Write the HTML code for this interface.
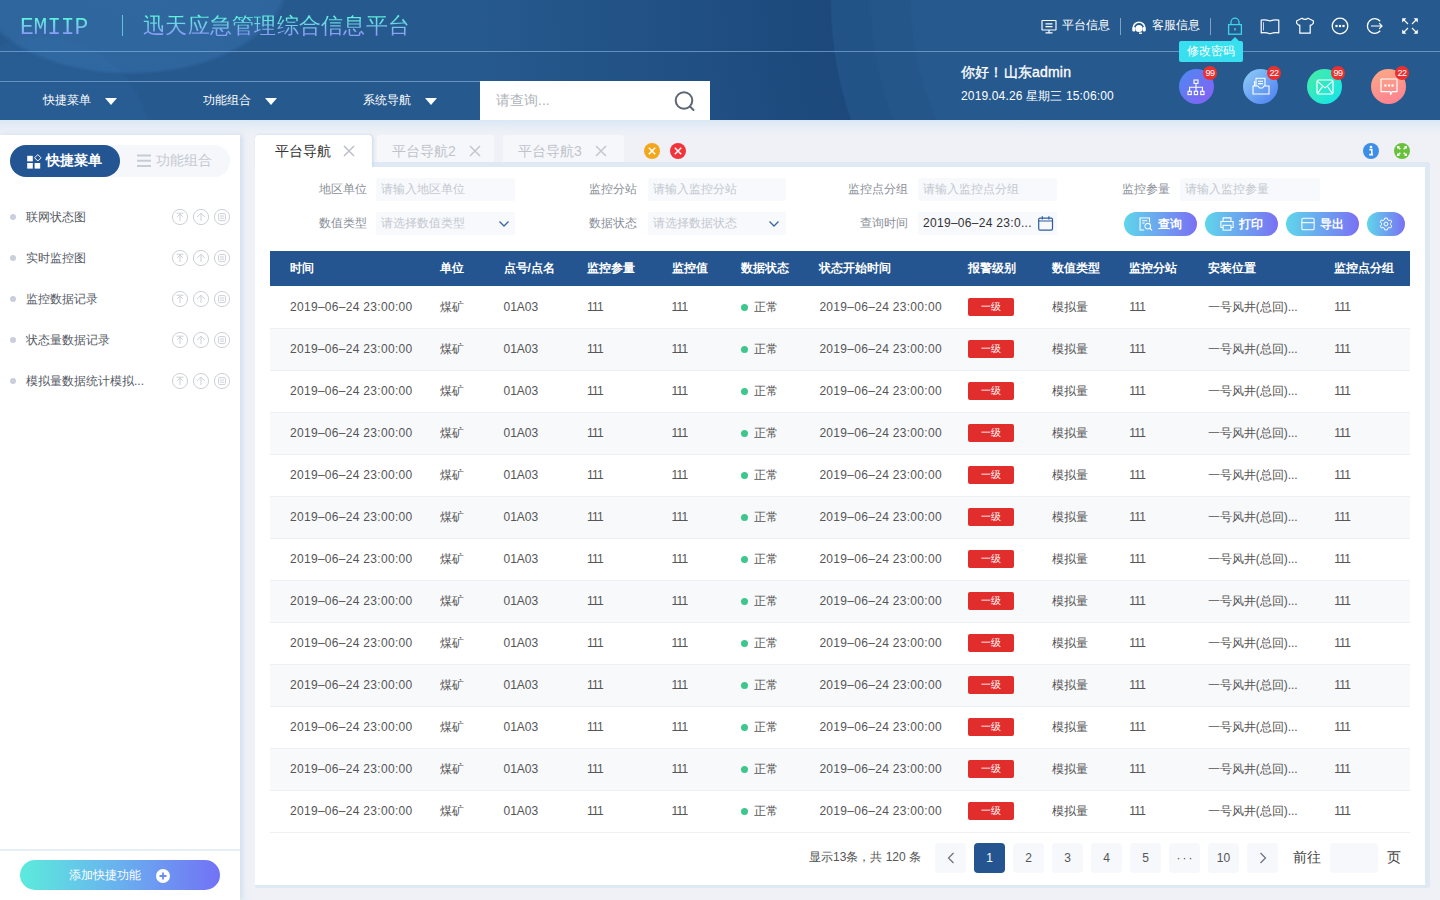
<!DOCTYPE html>
<html><head><meta charset="utf-8">
<style>
*{margin:0;padding:0;box-sizing:border-box}
html,body{width:1440px;height:900px;overflow:hidden}
body{font-family:"Liberation Sans",sans-serif;background:#eff1f7;position:relative;color:#333}
.a{position:absolute}
svg{position:absolute;overflow:visible}
#hdr{position:absolute;left:0;top:0;width:1440px;height:120px;overflow:hidden;
 background:
  radial-gradient(circle at 1200px 0px, rgba(8,38,85,0) 288px, rgba(8,38,85,.06) 290px, rgba(8,38,85,.06) 328px, rgba(8,38,85,.12) 330px, rgba(8,38,85,.12) 368px, rgba(8,38,85,.32) 370px, rgba(8,38,85,0) 720px),
  radial-gradient(ellipse 160px 95px at 130px -20px, rgba(75,145,210,.26) 0, rgba(75,145,210,.22) 96%, rgba(75,145,210,0) 100%),
  radial-gradient(circle at 40px 150px, rgba(60,130,200,.10) 0, rgba(60,130,200,.08) 110px, rgba(60,130,200,0) 114px),
  #26598e}
#hdr .l1{position:absolute;left:0;top:51px;width:1440px;height:1px;background:rgba(140,185,230,.6)}
#hdr .l2{position:absolute;left:0;top:81px;width:480px;height:1px;background:rgba(140,185,230,.6)}
.logo{position:absolute;left:20px;top:14px;font-family:"Liberation Mono",monospace;font-size:23px;line-height:28px;letter-spacing:-0.2px;
 background:linear-gradient(#5ff2dc 18%,#8d9af8 72%);-webkit-background-clip:text;background-clip:text;color:transparent}
.vsep{position:absolute;left:122px;top:15px;width:1px;height:21px;background:rgba(110,220,235,.8)}
.title{position:absolute;left:143px;top:12px;font-size:22px;line-height:28px;white-space:nowrap;letter-spacing:.25px;
 background:linear-gradient(#5ff2dc 18%,#8a9ef6 78%);-webkit-background-clip:text;background-clip:text;color:transparent}
.nav{position:absolute;top:81px;height:39px;width:160px;color:#fff;font-size:12px;line-height:39px}
.nav span{position:absolute;left:43px;top:0}
.nav i{position:absolute;left:105px;top:17px;width:0;height:0;border-left:6px solid transparent;border-right:6px solid transparent;border-top:7px solid #fff}
#search{position:absolute;left:480px;top:81px;width:230px;height:39px;background:#fff}
#search span{position:absolute;left:16px;top:0;line-height:39px;font-size:14px;color:#aeb2ba}
.tr{position:absolute;top:18px;font-size:12px;line-height:14px;color:#fff;white-space:nowrap}
.hsep{position:absolute;top:18px;width:1px;height:17px;background:rgba(200,220,240,.55)}
.tip{position:absolute;left:1179px;top:41px;width:64px;height:21px;background:#38dfee;border-radius:2px;color:#fff;font-size:12px;line-height:21px;text-align:center}
.tip:before{content:"";position:absolute;left:52px;top:-4px;border-left:4px solid transparent;border-right:4px solid transparent;border-bottom:4px solid #38dfee}
.hello{position:absolute;left:961px;top:63px;font-size:14px;line-height:18px;color:#fff;white-space:nowrap;-webkit-text-stroke:.35px #fff;letter-spacing:.2px}
.date{position:absolute;left:961px;top:89px;font-size:12px;line-height:15px;color:#fff;white-space:nowrap;letter-spacing:.15px}
.circ{position:absolute;top:68.5px;width:35px;height:35px;border-radius:50%}
.badge{position:absolute;top:66px;width:14px;height:14px;border-radius:50%;background:#e9302f;color:#fff;font-size:9px;line-height:14px;text-align:center;letter-spacing:-.5px}
/*MAINCSS*/.tabt{font-size:14px;line-height:18px;white-space:nowrap}
.lab{font-size:12px;line-height:15px;color:#8a8f99;text-align:right;white-space:nowrap}
.inp{height:23px;background:#f7f9fc;border-radius:2px}
.inp span{position:absolute;left:5px;top:4px;font-size:12px;line-height:15px;white-space:nowrap}
.inp .ph{color:#c4c8d0}
.inp .val{color:#333;letter-spacing:.3px}
.btn{height:24px;border-radius:12px;background:linear-gradient(90deg,#5fd6ea,#7a70f4)}
.btnt{font-size:12px;line-height:24px;color:#fff;font-weight:bold}
.th{font-size:12px;line-height:15px;color:#fff;font-weight:bold;white-space:nowrap}
.td{font-size:12px;line-height:15px;color:#555;white-space:nowrap}
.td.num{letter-spacing:.3px}
.lvl{width:46px;height:18px;background:#e22d2d;border-radius:2px;color:#fff;font-size:10px;line-height:17px;text-align:center}
.pgt{font-size:12px;line-height:16px;color:#555;white-space:nowrap}
.pg{width:31px;height:30px;background:#f6f8fb;border-radius:4px;font-size:12px;line-height:30px;text-align:center;color:#555}
.pg.on{background:#245590;color:#fff}
.td.one{letter-spacing:-0.8px}
/*ENDMAINCSS*/</style></head><body>
<div id="hdr">
  <div class="l1"></div><div class="l2"></div>
  <div class="logo">EMIIP</div>
  <div class="vsep"></div>
  <div class="title">迅天应急管理综合信息平台</div>
  <div class="nav" style="left:0"><span>快捷菜单</span><i></i></div>
  <div class="nav" style="left:160px"><span>功能组合</span><i></i></div>
  <div class="nav" style="left:320px"><span>系统导航</span><i></i></div>
  <div id="search"><span>请查询...</span>
    <svg width="24" height="24" style="left:193px;top:8px" viewBox="0 0 24 24"><circle cx="11" cy="11.5" r="8.3" fill="none" stroke="#5c6675" stroke-width="2"/><path d="M17 17.5 L20.5 21" stroke="#5c6675" stroke-width="2" stroke-linecap="round"/></svg>
  </div>
  <!-- top right -->
  <svg width="16" height="16" style="left:1041px;top:19px" viewBox="0 0 16 16"><rect x="1" y="1.5" width="14" height="9.5" rx="0.5" fill="none" stroke="#fff" stroke-width="1.15"/><path d="M4.5 4.8h7M4.5 7.6h7M8 11v2.8M4.5 13.9h7" stroke="#fff" stroke-width="1.15" fill="none"/></svg>
  <div class="tr" style="left:1062px">平台信息</div>
  <div class="hsep" style="left:1120px"></div>
  <svg width="16" height="16" style="left:1131px;top:19px" viewBox="0 0 16 16"><path d="M2.2 9 A5.8 5.8 0 0 1 13.8 9" fill="none" stroke="#fff" stroke-width="1.6"/><rect x="1.3" y="8" width="3" height="4.5" rx="1.2" fill="#fff"/><rect x="11.7" y="8" width="3" height="4.5" rx="1.2" fill="#fff"/><circle cx="8" cy="9.5" r="3.6" fill="#fff"/><path d="M8 14.2 h3" stroke="#fff" stroke-width="1.4"/></svg>
  <div class="tr" style="left:1152px">客服信息</div>
  <div class="hsep" style="left:1210px"></div>
  <!-- lock -->
  <svg width="16" height="18" style="left:1227px;top:16.5px" viewBox="0 0 16 18"><path d="M4 7.5V5.2A4 4 0 0 1 12 5.2V7.5" fill="none" stroke="#3ed6e6" stroke-width="1.3"/><rect x="1.6" y="7.6" width="12.8" height="9.6" fill="none" stroke="#3ed6e6" stroke-width="1.3"/><path d="M8 11v2.6" stroke="#3ed6e6" stroke-width="1.4"/></svg>
  <!-- book -->
  <svg width="20" height="16" style="left:1260px;top:18.5px" viewBox="0 0 20 16"><path d="M1.2 1.2 Q5.5 0.3 10 2 Q14.5 0.3 18.8 1.2 V13.8 Q14.5 13 10 14.8 Q5.5 13 1.2 13.8 Z" fill="none" stroke="#fff" stroke-width="1.2" stroke-linejoin="round"/><path d="M3.5 3.2 V11.5" stroke="#fff" stroke-width="0.9" opacity=".8"/></svg>
  <!-- shirt -->
  <svg width="20" height="18" style="left:1295px;top:17px" viewBox="0 0 20 18"><path d="M7 1.2 Q10 3.5 13 1.2 L18.2 3.8 Q19.3 6.5 16.2 8.2 L15.2 8 V16.2 H4.8 V8 L3.8 8.2 Q0.7 6.5 1.8 3.8 Z" fill="none" stroke="#fff" stroke-width="1.2" stroke-linejoin="round"/></svg>
  <!-- dots -->
  <svg width="18" height="18" style="left:1331px;top:17px" viewBox="0 0 18 18"><circle cx="9" cy="9" r="7.8" fill="none" stroke="#fff" stroke-width="1.3"/><rect x="4.4" y="7.9" width="2.2" height="2.2" fill="#fff"/><rect x="7.9" y="7.9" width="2.2" height="2.2" fill="#fff"/><rect x="11.4" y="7.9" width="2.2" height="2.2" fill="#fff"/></svg>
  <!-- exit -->
  <svg width="18" height="18" style="left:1366px;top:17px" viewBox="0 0 18 18"><path d="M14.2 4.2 A7.3 7.3 0 1 0 14.2 13.8" fill="none" stroke="#fff" stroke-width="1.3"/><path d="M5 9 H16 M13.2 6.2 L16 9 L13.2 11.8" fill="none" stroke="#fff" stroke-width="1.2"/></svg>
  <!-- fullscreen -->
  <svg width="18" height="18" style="left:1401px;top:17px" viewBox="0 0 18 18"><g stroke="#fff" stroke-width="1.1" fill="none"><path d="M3 3L7 7M15 3L11 7M3 15L7 11M15 15L11 11"/></g><g fill="#fff"><path d="M1.2 1.2H5.4L1.2 5.4Z"/><path d="M16.8 1.2H12.6L16.8 5.4Z"/><path d="M1.2 16.8H5.4L1.2 12.6Z"/><path d="M16.8 16.8H12.6L16.8 12.6Z"/></g></svg>
  <div class="tip">修改密码</div>
  <div class="hello">你好！山东admin</div>
  <div class="date">2019.04.26 星期三 15:06:00</div>
  <div class="circ" style="left:1179px;background:linear-gradient(135deg,#4b8af2,#8a5ef4)"></div>
  <div class="circ" style="left:1243px;background:linear-gradient(135deg,#8fd0f7,#4c7cf0)"></div>
  <div class="circ" style="left:1307px;background:linear-gradient(135deg,#48eda2,#12e4ee)"></div>
  <div class="circ" style="left:1371px;background:linear-gradient(160deg,#fcaa84,#fd7f92)"></div>
  <!-- circle icons -->
  <svg width="18" height="18" style="left:1187px;top:78.5px" viewBox="0 0 18 18"><rect x="7" y="1" width="4" height="3.4" fill="none" stroke="#fff" stroke-width="1.1"/><path d="M9 4.4 V8.2 M2.6 12.3 V8.2 H15.4 V12.3 M9 8.2 V12.3" fill="none" stroke="#fff" stroke-width="1.1"/><rect x="1" y="12.3" width="3.3" height="3.3" fill="none" stroke="#fff" stroke-width="1.1"/><rect x="7.3" y="12.3" width="3.3" height="3.3" fill="none" stroke="#fff" stroke-width="1.1"/><rect x="13.7" y="12.3" width="3.3" height="3.3" fill="none" stroke="#fff" stroke-width="1.1"/></svg>
  <svg width="18" height="18" style="left:1252px;top:77px" viewBox="0 0 18 18"><path d="M4 9 V1.2 H13 V9" fill="none" stroke="#fff" stroke-width="1.1"/><path d="M2.5 4 V9" stroke="#fff" stroke-width="1.1"/><path d="M6 4.2 H11 M6 6.6 H11" stroke="#fff" stroke-width="1.1"/><path d="M1 9 H6 L7.5 11 H10.5 L12 9 H17 V17 H1 Z" fill="none" stroke="#fff" stroke-width="1.1"/></svg>
  <svg width="18" height="16" style="left:1315.5px;top:79px" viewBox="0 0 18 16"><rect x="1" y="1" width="16" height="14" rx="1.5" fill="none" stroke="#fff" stroke-width="1.2"/><path d="M1.3 2.2 L9 8.8 L16.7 2.2 M1.6 14.4 L6.4 7.6 M16.4 14.4 L11.6 7.6" fill="none" stroke="#fff" stroke-width="1.1"/></svg>
  <svg width="18" height="18" style="left:1380px;top:78px" viewBox="0 0 18 18"><path d="M1 1 H17 V13.6 H12.2 L10.6 16.6 L10.2 13.6 H1 Z" fill="none" stroke="#fff" stroke-width="1.15" stroke-linejoin="round"/><rect x="4.3" y="6.4" width="2.2" height="2.2" fill="#fff"/><rect x="7.9" y="6.4" width="2.2" height="2.2" fill="#fff"/><rect x="11.5" y="6.4" width="2.2" height="2.2" fill="#fff"/></svg>
  <div class="badge" style="left:1203px">99</div>
  <div class="badge" style="left:1267px">22</div>
  <div class="badge" style="left:1331px">99</div>
  <div class="badge" style="left:1395px">22</div>
</div>
<div id="mainbg" class="a" style="left:0;top:120px;width:1440px;height:780px;background:linear-gradient(#dae8f5 0,#e8eef6 8px,#eff1f7 15px)"></div>
<div id="side" class="a" style="left:0;top:135px;width:240px;height:765px;background:#fff;box-shadow:2px 0 6px rgba(180,205,230,.6)">
  <div class="a" style="left:10px;top:10px;width:220px;height:32px;border-radius:16px;background:#f5f7fa"></div>
  <div class="a" style="left:10px;top:10px;width:110px;height:32px;border-radius:16px;background:#235592"></div>
  <svg width="15" height="15" style="left:26.5px;top:18.5px" viewBox="0 0 15 15"><rect x="0.2" y="1.8" width="5.6" height="5.6" fill="#fff"/><rect x="0.2" y="9" width="5.6" height="5.6" fill="#fff"/><rect x="7.6" y="9" width="5.6" height="5.6" fill="#fff"/><path d="M10.8 0.6 L14 3.8 L10.8 7 L7.6 3.8 Z" fill="none" stroke="#fff" stroke-width="1"/></svg>
  <div class="a" style="left:46px;top:16px;font-size:14px;line-height:18px;color:#fff;font-weight:bold">快捷菜单</div>
  <svg width="15" height="14" style="left:136.5px;top:19px" viewBox="0 0 15 14"><path d="M0 1.5H14M0 6.8H14M0 12.1H14" stroke="#c6cbd5" stroke-width="2"/></svg>
  <div class="a" style="left:156px;top:16px;font-size:14px;line-height:18px;color:#c5c9d3">功能组合</div>
  <div class="a" style="left:10px;top:78.7px;width:6px;height:6px;border-radius:50%;background:#c9cfdb"></div>
  <div class="a" style="left:26px;top:73.7px;font-size:12px;line-height:16px;color:#555a64;white-space:nowrap">联网状态图</div>
  <svg width="60" height="18" style="left:171px;top:72.7px" viewBox="0 0 60 18"><g fill="none" stroke="#cdd0d7" stroke-width="1"><circle cx="9" cy="9" r="7.6"/><circle cx="30" cy="9" r="7.6"/><circle cx="51" cy="9" r="7.6"/><path d="M5.5 5.2H12.5M6.2 8.8L9 6L11.8 8.8M9 6V13"/><path d="M26.2 9L30 5.2L33.8 9M30 5.2V13"/><rect x="47.6" y="5.6" width="6.8" height="7" rx="1"/><path d="M49 8H53M49 10.2H53"/></g></svg>
  <div class="a" style="left:10px;top:119.7px;width:6px;height:6px;border-radius:50%;background:#c9cfdb"></div>
  <div class="a" style="left:26px;top:114.7px;font-size:12px;line-height:16px;color:#555a64;white-space:nowrap">实时监控图</div>
  <svg width="60" height="18" style="left:171px;top:113.7px" viewBox="0 0 60 18"><g fill="none" stroke="#cdd0d7" stroke-width="1"><circle cx="9" cy="9" r="7.6"/><circle cx="30" cy="9" r="7.6"/><circle cx="51" cy="9" r="7.6"/><path d="M5.5 5.2H12.5M6.2 8.8L9 6L11.8 8.8M9 6V13"/><path d="M26.2 9L30 5.2L33.8 9M30 5.2V13"/><rect x="47.6" y="5.6" width="6.8" height="7" rx="1"/><path d="M49 8H53M49 10.2H53"/></g></svg>
  <div class="a" style="left:10px;top:160.7px;width:6px;height:6px;border-radius:50%;background:#c9cfdb"></div>
  <div class="a" style="left:26px;top:155.7px;font-size:12px;line-height:16px;color:#555a64;white-space:nowrap">监控数据记录</div>
  <svg width="60" height="18" style="left:171px;top:154.7px" viewBox="0 0 60 18"><g fill="none" stroke="#cdd0d7" stroke-width="1"><circle cx="9" cy="9" r="7.6"/><circle cx="30" cy="9" r="7.6"/><circle cx="51" cy="9" r="7.6"/><path d="M5.5 5.2H12.5M6.2 8.8L9 6L11.8 8.8M9 6V13"/><path d="M26.2 9L30 5.2L33.8 9M30 5.2V13"/><rect x="47.6" y="5.6" width="6.8" height="7" rx="1"/><path d="M49 8H53M49 10.2H53"/></g></svg>
  <div class="a" style="left:10px;top:201.7px;width:6px;height:6px;border-radius:50%;background:#c9cfdb"></div>
  <div class="a" style="left:26px;top:196.7px;font-size:12px;line-height:16px;color:#555a64;white-space:nowrap">状态量数据记录</div>
  <svg width="60" height="18" style="left:171px;top:195.7px" viewBox="0 0 60 18"><g fill="none" stroke="#cdd0d7" stroke-width="1"><circle cx="9" cy="9" r="7.6"/><circle cx="30" cy="9" r="7.6"/><circle cx="51" cy="9" r="7.6"/><path d="M5.5 5.2H12.5M6.2 8.8L9 6L11.8 8.8M9 6V13"/><path d="M26.2 9L30 5.2L33.8 9M30 5.2V13"/><rect x="47.6" y="5.6" width="6.8" height="7" rx="1"/><path d="M49 8H53M49 10.2H53"/></g></svg>
  <div class="a" style="left:10px;top:242.7px;width:6px;height:6px;border-radius:50%;background:#c9cfdb"></div>
  <div class="a" style="left:26px;top:237.7px;font-size:12px;line-height:16px;color:#555a64;white-space:nowrap">模拟量数据统计模拟...</div>
  <svg width="60" height="18" style="left:171px;top:236.7px" viewBox="0 0 60 18"><g fill="none" stroke="#cdd0d7" stroke-width="1"><circle cx="9" cy="9" r="7.6"/><circle cx="30" cy="9" r="7.6"/><circle cx="51" cy="9" r="7.6"/><path d="M5.5 5.2H12.5M6.2 8.8L9 6L11.8 8.8M9 6V13"/><path d="M26.2 9L30 5.2L33.8 9M30 5.2V13"/><rect x="47.6" y="5.6" width="6.8" height="7" rx="1"/><path d="M49 8H53M49 10.2H53"/></g></svg>
  
  <div class="a" style="left:0;top:714px;width:240px;height:2px;background:#e6eef7"></div>
  <div class="a" style="left:20px;top:725px;width:200px;height:30px;border-radius:15px;background:linear-gradient(90deg,#5cebdc,#68b6ee 45%,#7272f5)"></div>
  <div class="a" style="left:69px;top:732px;font-size:12px;line-height:16px;color:#fff">添加快捷功能</div>
  <div class="a" style="left:155.5px;top:733.5px;width:14px;height:14px;border-radius:50%;background:#fff"></div>
  <svg width="14" height="14" style="left:155.5px;top:733.5px" viewBox="0 0 14 14"><path d="M7 3.5V10.5M3.5 7H10.5" stroke="#6b8cf0" stroke-width="1.8"/></svg>
</div>
<!-- tabs -->
<div class="a" style="left:255px;top:162px;width:1175px;height:726px;background:#dfe9f4;border-radius:2px"></div>
<div class="a" style="left:255px;top:135px;width:117px;height:32px;background:#fff;border-radius:4px 4px 0 0;box-shadow:1px 0 3px rgba(170,200,230,.6)"></div>
<div class="a" style="left:377px;top:135px;width:117px;height:27px;background:#f6f7fa;border-radius:4px 4px 0 0"></div>
<div class="a" style="left:503px;top:135px;width:121px;height:27px;background:#f6f7fa;border-radius:4px 4px 0 0"></div>
<div class="a tabt" style="left:275px;top:142px;color:#333">平台导航</div>
<div class="a tabt" style="left:392px;top:142px;color:#bfc3cc">平台导航2</div>
<div class="a tabt" style="left:518px;top:142px;color:#bfc3cc">平台导航3</div>
<svg width="12" height="12" style="left:343px;top:145px" viewBox="0 0 12 12"><path d="M1 1L11 11M11 1L1 11" stroke="#bcc0c8" stroke-width="1.5"/></svg>
<svg width="12" height="12" style="left:469px;top:145px" viewBox="0 0 12 12"><path d="M1 1L11 11M11 1L1 11" stroke="#c3c7cf" stroke-width="1.5"/></svg>
<svg width="12" height="12" style="left:595px;top:145px" viewBox="0 0 12 12"><path d="M1 1L11 11M11 1L1 11" stroke="#c3c7cf" stroke-width="1.5"/></svg>
<svg width="18" height="18" style="left:643px;top:142px" viewBox="0 0 18 18"><circle cx="9" cy="9" r="8" fill="#f3a71c"/><path d="M5.8 5.8L12.2 12.2M12.2 5.8L5.8 12.2" stroke="#fff" stroke-width="1.5"/></svg>
<svg width="18" height="18" style="left:669px;top:142px" viewBox="0 0 18 18"><circle cx="9" cy="9" r="8" fill="#f2343a"/><path d="M5.8 5.8L12.2 12.2M12.2 5.8L5.8 12.2" stroke="#fff" stroke-width="1.5"/></svg>
<svg width="18" height="18" style="left:1362px;top:142px" viewBox="0 0 18 18"><circle cx="9" cy="9" r="8" fill="#3c8ee6"/><circle cx="9" cy="5" r="1.3" fill="#fff"/><path d="M7.4 7.6H9.8V12.6H11M7.2 12.6H9.8" stroke="#fff" stroke-width="1.6" fill="none"/></svg>
<svg width="18" height="18" style="left:1393px;top:142px" viewBox="0 0 18 18"><circle cx="9" cy="9" r="8" fill="#67c23a"/><path d="M4.5 4.5L7.3 7.3M13.5 4.5L10.7 7.3M4.5 13.5L7.3 10.7M13.5 13.5L10.7 10.7" stroke="#fff" stroke-width="1.6"/><path d="M4 4H7L4 7ZM14 4H11L14 7ZM4 14H7L4 11ZM14 14H11L14 11Z" fill="#fff"/></svg>
<div id="panel" class="a" style="left:255px;top:167px;width:1170px;height:718px;background:#fff">
<div class="a lab" style="left:32px;top:15px;width:80px">地区单位</div>
<div class="a inp" style="left:121px;top:11px;width:139px"><span class="ph">请输入地区单位</span></div>
<div class="a lab" style="left:302px;top:15px;width:80px">监控分站</div>
<div class="a inp" style="left:393px;top:11px;width:138px"><span class="ph">请输入监控分站</span></div>
<div class="a lab" style="left:573px;top:15px;width:80px">监控点分组</div>
<div class="a inp" style="left:663px;top:11px;width:139px"><span class="ph">请输入监控点分组</span></div>
<div class="a lab" style="left:835px;top:15px;width:80px">监控参量</div>
<div class="a inp" style="left:925px;top:11px;width:140px"><span class="ph">请输入监控参量</span></div>
<div class="a lab" style="left:32px;top:49px;width:80px">数值类型</div>
<div class="a inp" style="left:121px;top:45px;width:139px"><span class="ph">请选择数值类型</span></div>
<div class="a lab" style="left:302px;top:49px;width:80px">数据状态</div>
<div class="a inp" style="left:393px;top:45px;width:138px"><span class="ph">请选择数据状态</span></div>
<div class="a lab" style="left:573px;top:49px;width:80px">查询时间</div>
<div class="a inp" style="left:663px;top:45px;width:139px"><span class="val">2019–06–24 23:0...</span></div>
<svg width="12" height="8" style="left:243px;top:53px" viewBox="0 0 12 8"><path d="M1.5 1.5L6 6L10.5 1.5" fill="none" stroke="#3a64a0" stroke-width="1.3"/></svg>
<svg width="12" height="8" style="left:513px;top:53px" viewBox="0 0 12 8"><path d="M1.5 1.5L6 6L10.5 1.5" fill="none" stroke="#3a64a0" stroke-width="1.3"/></svg>
<svg width="16" height="15" style="left:783px;top:49px" viewBox="0 0 16 15"><rect x="0.7" y="2.2" width="13.8" height="12" rx="1.4" fill="none" stroke="#2f5d9c" stroke-width="1.2"/><path d="M0.7 5H14.5M4.3 0.3V3.6M10.9 0.3V3.6" stroke="#2f5d9c" stroke-width="1.2"/></svg>
<div class="a btn" style="left:869px;top:45px;width:73px"></div>
<div class="a btnt" style="left:903px;top:45px">查询</div>
<div class="a btn" style="left:950px;top:45px;width:73px"></div>
<div class="a btnt" style="left:984px;top:45px">打印</div>
<div class="a btn" style="left:1031px;top:45px;width:73px"></div>
<div class="a btnt" style="left:1065px;top:45px">导出</div>
<div class="a btn" style="left:1112px;top:45px;width:38px"></div>
<svg width="14" height="14" style="left:884px;top:50px" viewBox="0 0 16 16"><path d="M12 6V1.2H1.2V14.8H6" fill="none" stroke="#fff" stroke-width="1.2"/><path d="M3.5 4.2H9.5M3.5 6.8H6.5" stroke="#fff" stroke-width="1.2"/><circle cx="10" cy="10.5" r="3.2" fill="none" stroke="#fff" stroke-width="1.2"/><path d="M12.3 12.8L14.8 15.2" stroke="#fff" stroke-width="1.3"/></svg>
<svg width="14" height="14" style="left:965px;top:50px" viewBox="0 0 16 16"><path d="M3.5 5V1H12.5V5" fill="none" stroke="#fff" stroke-width="1.2"/><path d="M3.5 12H1V5.2H15V12H12.5" fill="none" stroke="#fff" stroke-width="1.2"/><rect x="3.5" y="9.5" width="9" height="5.5" fill="none" stroke="#fff" stroke-width="1.2"/></svg>
<svg width="14" height="14" style="left:1046px;top:50px" viewBox="0 0 16 16"><rect x="1" y="1.5" width="14" height="13" rx="1.5" fill="none" stroke="#fff" stroke-width="1.2"/><path d="M1 6.5H15" stroke="#fff" stroke-width="1.2"/></svg>
<svg width="14" height="14" style="left:1124px;top:50px" viewBox="0 0 16 16"><path d="M6.6 1.2H9.4L9.8 3.1L11.4 4L13.2 3.4L14.6 5.8L13.2 7.1V8.9L14.6 10.2L13.2 12.6L11.4 12L9.8 12.9L9.4 14.8H6.6L6.2 12.9L4.6 12L2.8 12.6L1.4 10.2L2.8 8.9V7.1L1.4 5.8L2.8 3.4L4.6 4L6.2 3.1Z" fill="none" stroke="#fff" stroke-width="1.1" stroke-linejoin="round"/><circle cx="8" cy="8" r="2.2" fill="none" stroke="#fff" stroke-width="1.1"/></svg>
<div class="a" style="left:15px;top:84px;width:1140px;height:35px;background:#245590"></div>
<div class="a th" style="left:35px;top:94px">时间</div>
<div class="a th" style="left:184.5px;top:94px">单位</div>
<div class="a th" style="left:248.5px;top:94px">点号/点名</div>
<div class="a th" style="left:332px;top:94px">监控参量</div>
<div class="a th" style="left:416.5px;top:94px">监控值</div>
<div class="a th" style="left:486.20000000000005px;top:94px">数据状态</div>
<div class="a th" style="left:564.4px;top:94px">状态开始时间</div>
<div class="a th" style="left:713.3px;top:94px">报警级别</div>
<div class="a th" style="left:796.7px;top:94px">数值类型</div>
<div class="a th" style="left:874.2px;top:94px">监控分站</div>
<div class="a th" style="left:952.7px;top:94px">安装位置</div>
<div class="a th" style="left:1079.2px;top:94px">监控点分组</div>
<div class="a" style="left:15px;top:120px;width:1140px;height:42px;background:#fff;border-bottom:1px solid #eef0f4"></div>
<div class="a td num" style="left:35px;top:133px">2019–06–24 23:00:00</div>
<div class="a td" style="left:184.5px;top:133px">煤矿</div>
<div class="a td" style="left:248.5px;top:133px">01A03</div>
<div class="a td one" style="left:332px;top:133px">111</div>
<div class="a td one" style="left:416.5px;top:133px">111</div>
<div class="a td num" style="left:564.4px;top:133px">2019–06–24 23:00:00</div>
<div class="a td" style="left:796.7px;top:133px">模拟量</div>
<div class="a td one" style="left:874.2px;top:133px">111</div>
<div class="a td" style="left:952.7px;top:133px">一号风井(总回)...</div>
<div class="a td one" style="left:1079.2px;top:133px">111</div>
<div class="a" style="left:486px;top:136.5px;width:7px;height:7px;border-radius:50%;background:#3ec78d"></div>
<div class="a td" style="left:498.5px;top:133px">正常</div>
<div class="a lvl" style="left:713px;top:131px">一级</div>
<div class="a" style="left:15px;top:162px;width:1140px;height:42px;background:#f8f9fb;border-bottom:1px solid #eef0f4"></div>
<div class="a td num" style="left:35px;top:175px">2019–06–24 23:00:00</div>
<div class="a td" style="left:184.5px;top:175px">煤矿</div>
<div class="a td" style="left:248.5px;top:175px">01A03</div>
<div class="a td one" style="left:332px;top:175px">111</div>
<div class="a td one" style="left:416.5px;top:175px">111</div>
<div class="a td num" style="left:564.4px;top:175px">2019–06–24 23:00:00</div>
<div class="a td" style="left:796.7px;top:175px">模拟量</div>
<div class="a td one" style="left:874.2px;top:175px">111</div>
<div class="a td" style="left:952.7px;top:175px">一号风井(总回)...</div>
<div class="a td one" style="left:1079.2px;top:175px">111</div>
<div class="a" style="left:486px;top:178.5px;width:7px;height:7px;border-radius:50%;background:#3ec78d"></div>
<div class="a td" style="left:498.5px;top:175px">正常</div>
<div class="a lvl" style="left:713px;top:173px">一级</div>
<div class="a" style="left:15px;top:204px;width:1140px;height:42px;background:#fff;border-bottom:1px solid #eef0f4"></div>
<div class="a td num" style="left:35px;top:217px">2019–06–24 23:00:00</div>
<div class="a td" style="left:184.5px;top:217px">煤矿</div>
<div class="a td" style="left:248.5px;top:217px">01A03</div>
<div class="a td one" style="left:332px;top:217px">111</div>
<div class="a td one" style="left:416.5px;top:217px">111</div>
<div class="a td num" style="left:564.4px;top:217px">2019–06–24 23:00:00</div>
<div class="a td" style="left:796.7px;top:217px">模拟量</div>
<div class="a td one" style="left:874.2px;top:217px">111</div>
<div class="a td" style="left:952.7px;top:217px">一号风井(总回)...</div>
<div class="a td one" style="left:1079.2px;top:217px">111</div>
<div class="a" style="left:486px;top:220.5px;width:7px;height:7px;border-radius:50%;background:#3ec78d"></div>
<div class="a td" style="left:498.5px;top:217px">正常</div>
<div class="a lvl" style="left:713px;top:215px">一级</div>
<div class="a" style="left:15px;top:246px;width:1140px;height:42px;background:#f8f9fb;border-bottom:1px solid #eef0f4"></div>
<div class="a td num" style="left:35px;top:259px">2019–06–24 23:00:00</div>
<div class="a td" style="left:184.5px;top:259px">煤矿</div>
<div class="a td" style="left:248.5px;top:259px">01A03</div>
<div class="a td one" style="left:332px;top:259px">111</div>
<div class="a td one" style="left:416.5px;top:259px">111</div>
<div class="a td num" style="left:564.4px;top:259px">2019–06–24 23:00:00</div>
<div class="a td" style="left:796.7px;top:259px">模拟量</div>
<div class="a td one" style="left:874.2px;top:259px">111</div>
<div class="a td" style="left:952.7px;top:259px">一号风井(总回)...</div>
<div class="a td one" style="left:1079.2px;top:259px">111</div>
<div class="a" style="left:486px;top:262.5px;width:7px;height:7px;border-radius:50%;background:#3ec78d"></div>
<div class="a td" style="left:498.5px;top:259px">正常</div>
<div class="a lvl" style="left:713px;top:257px">一级</div>
<div class="a" style="left:15px;top:288px;width:1140px;height:42px;background:#fff;border-bottom:1px solid #eef0f4"></div>
<div class="a td num" style="left:35px;top:301px">2019–06–24 23:00:00</div>
<div class="a td" style="left:184.5px;top:301px">煤矿</div>
<div class="a td" style="left:248.5px;top:301px">01A03</div>
<div class="a td one" style="left:332px;top:301px">111</div>
<div class="a td one" style="left:416.5px;top:301px">111</div>
<div class="a td num" style="left:564.4px;top:301px">2019–06–24 23:00:00</div>
<div class="a td" style="left:796.7px;top:301px">模拟量</div>
<div class="a td one" style="left:874.2px;top:301px">111</div>
<div class="a td" style="left:952.7px;top:301px">一号风井(总回)...</div>
<div class="a td one" style="left:1079.2px;top:301px">111</div>
<div class="a" style="left:486px;top:304.5px;width:7px;height:7px;border-radius:50%;background:#3ec78d"></div>
<div class="a td" style="left:498.5px;top:301px">正常</div>
<div class="a lvl" style="left:713px;top:299px">一级</div>
<div class="a" style="left:15px;top:330px;width:1140px;height:42px;background:#f8f9fb;border-bottom:1px solid #eef0f4"></div>
<div class="a td num" style="left:35px;top:343px">2019–06–24 23:00:00</div>
<div class="a td" style="left:184.5px;top:343px">煤矿</div>
<div class="a td" style="left:248.5px;top:343px">01A03</div>
<div class="a td one" style="left:332px;top:343px">111</div>
<div class="a td one" style="left:416.5px;top:343px">111</div>
<div class="a td num" style="left:564.4px;top:343px">2019–06–24 23:00:00</div>
<div class="a td" style="left:796.7px;top:343px">模拟量</div>
<div class="a td one" style="left:874.2px;top:343px">111</div>
<div class="a td" style="left:952.7px;top:343px">一号风井(总回)...</div>
<div class="a td one" style="left:1079.2px;top:343px">111</div>
<div class="a" style="left:486px;top:346.5px;width:7px;height:7px;border-radius:50%;background:#3ec78d"></div>
<div class="a td" style="left:498.5px;top:343px">正常</div>
<div class="a lvl" style="left:713px;top:341px">一级</div>
<div class="a" style="left:15px;top:372px;width:1140px;height:42px;background:#fff;border-bottom:1px solid #eef0f4"></div>
<div class="a td num" style="left:35px;top:385px">2019–06–24 23:00:00</div>
<div class="a td" style="left:184.5px;top:385px">煤矿</div>
<div class="a td" style="left:248.5px;top:385px">01A03</div>
<div class="a td one" style="left:332px;top:385px">111</div>
<div class="a td one" style="left:416.5px;top:385px">111</div>
<div class="a td num" style="left:564.4px;top:385px">2019–06–24 23:00:00</div>
<div class="a td" style="left:796.7px;top:385px">模拟量</div>
<div class="a td one" style="left:874.2px;top:385px">111</div>
<div class="a td" style="left:952.7px;top:385px">一号风井(总回)...</div>
<div class="a td one" style="left:1079.2px;top:385px">111</div>
<div class="a" style="left:486px;top:388.5px;width:7px;height:7px;border-radius:50%;background:#3ec78d"></div>
<div class="a td" style="left:498.5px;top:385px">正常</div>
<div class="a lvl" style="left:713px;top:383px">一级</div>
<div class="a" style="left:15px;top:414px;width:1140px;height:42px;background:#f8f9fb;border-bottom:1px solid #eef0f4"></div>
<div class="a td num" style="left:35px;top:427px">2019–06–24 23:00:00</div>
<div class="a td" style="left:184.5px;top:427px">煤矿</div>
<div class="a td" style="left:248.5px;top:427px">01A03</div>
<div class="a td one" style="left:332px;top:427px">111</div>
<div class="a td one" style="left:416.5px;top:427px">111</div>
<div class="a td num" style="left:564.4px;top:427px">2019–06–24 23:00:00</div>
<div class="a td" style="left:796.7px;top:427px">模拟量</div>
<div class="a td one" style="left:874.2px;top:427px">111</div>
<div class="a td" style="left:952.7px;top:427px">一号风井(总回)...</div>
<div class="a td one" style="left:1079.2px;top:427px">111</div>
<div class="a" style="left:486px;top:430.5px;width:7px;height:7px;border-radius:50%;background:#3ec78d"></div>
<div class="a td" style="left:498.5px;top:427px">正常</div>
<div class="a lvl" style="left:713px;top:425px">一级</div>
<div class="a" style="left:15px;top:456px;width:1140px;height:42px;background:#fff;border-bottom:1px solid #eef0f4"></div>
<div class="a td num" style="left:35px;top:469px">2019–06–24 23:00:00</div>
<div class="a td" style="left:184.5px;top:469px">煤矿</div>
<div class="a td" style="left:248.5px;top:469px">01A03</div>
<div class="a td one" style="left:332px;top:469px">111</div>
<div class="a td one" style="left:416.5px;top:469px">111</div>
<div class="a td num" style="left:564.4px;top:469px">2019–06–24 23:00:00</div>
<div class="a td" style="left:796.7px;top:469px">模拟量</div>
<div class="a td one" style="left:874.2px;top:469px">111</div>
<div class="a td" style="left:952.7px;top:469px">一号风井(总回)...</div>
<div class="a td one" style="left:1079.2px;top:469px">111</div>
<div class="a" style="left:486px;top:472.5px;width:7px;height:7px;border-radius:50%;background:#3ec78d"></div>
<div class="a td" style="left:498.5px;top:469px">正常</div>
<div class="a lvl" style="left:713px;top:467px">一级</div>
<div class="a" style="left:15px;top:498px;width:1140px;height:42px;background:#f8f9fb;border-bottom:1px solid #eef0f4"></div>
<div class="a td num" style="left:35px;top:511px">2019–06–24 23:00:00</div>
<div class="a td" style="left:184.5px;top:511px">煤矿</div>
<div class="a td" style="left:248.5px;top:511px">01A03</div>
<div class="a td one" style="left:332px;top:511px">111</div>
<div class="a td one" style="left:416.5px;top:511px">111</div>
<div class="a td num" style="left:564.4px;top:511px">2019–06–24 23:00:00</div>
<div class="a td" style="left:796.7px;top:511px">模拟量</div>
<div class="a td one" style="left:874.2px;top:511px">111</div>
<div class="a td" style="left:952.7px;top:511px">一号风井(总回)...</div>
<div class="a td one" style="left:1079.2px;top:511px">111</div>
<div class="a" style="left:486px;top:514.5px;width:7px;height:7px;border-radius:50%;background:#3ec78d"></div>
<div class="a td" style="left:498.5px;top:511px">正常</div>
<div class="a lvl" style="left:713px;top:509px">一级</div>
<div class="a" style="left:15px;top:540px;width:1140px;height:42px;background:#fff;border-bottom:1px solid #eef0f4"></div>
<div class="a td num" style="left:35px;top:553px">2019–06–24 23:00:00</div>
<div class="a td" style="left:184.5px;top:553px">煤矿</div>
<div class="a td" style="left:248.5px;top:553px">01A03</div>
<div class="a td one" style="left:332px;top:553px">111</div>
<div class="a td one" style="left:416.5px;top:553px">111</div>
<div class="a td num" style="left:564.4px;top:553px">2019–06–24 23:00:00</div>
<div class="a td" style="left:796.7px;top:553px">模拟量</div>
<div class="a td one" style="left:874.2px;top:553px">111</div>
<div class="a td" style="left:952.7px;top:553px">一号风井(总回)...</div>
<div class="a td one" style="left:1079.2px;top:553px">111</div>
<div class="a" style="left:486px;top:556.5px;width:7px;height:7px;border-radius:50%;background:#3ec78d"></div>
<div class="a td" style="left:498.5px;top:553px">正常</div>
<div class="a lvl" style="left:713px;top:551px">一级</div>
<div class="a" style="left:15px;top:582px;width:1140px;height:42px;background:#f8f9fb;border-bottom:1px solid #eef0f4"></div>
<div class="a td num" style="left:35px;top:595px">2019–06–24 23:00:00</div>
<div class="a td" style="left:184.5px;top:595px">煤矿</div>
<div class="a td" style="left:248.5px;top:595px">01A03</div>
<div class="a td one" style="left:332px;top:595px">111</div>
<div class="a td one" style="left:416.5px;top:595px">111</div>
<div class="a td num" style="left:564.4px;top:595px">2019–06–24 23:00:00</div>
<div class="a td" style="left:796.7px;top:595px">模拟量</div>
<div class="a td one" style="left:874.2px;top:595px">111</div>
<div class="a td" style="left:952.7px;top:595px">一号风井(总回)...</div>
<div class="a td one" style="left:1079.2px;top:595px">111</div>
<div class="a" style="left:486px;top:598.5px;width:7px;height:7px;border-radius:50%;background:#3ec78d"></div>
<div class="a td" style="left:498.5px;top:595px">正常</div>
<div class="a lvl" style="left:713px;top:593px">一级</div>
<div class="a" style="left:15px;top:624px;width:1140px;height:42px;background:#fff;border-bottom:1px solid #eef0f4"></div>
<div class="a td num" style="left:35px;top:637px">2019–06–24 23:00:00</div>
<div class="a td" style="left:184.5px;top:637px">煤矿</div>
<div class="a td" style="left:248.5px;top:637px">01A03</div>
<div class="a td one" style="left:332px;top:637px">111</div>
<div class="a td one" style="left:416.5px;top:637px">111</div>
<div class="a td num" style="left:564.4px;top:637px">2019–06–24 23:00:00</div>
<div class="a td" style="left:796.7px;top:637px">模拟量</div>
<div class="a td one" style="left:874.2px;top:637px">111</div>
<div class="a td" style="left:952.7px;top:637px">一号风井(总回)...</div>
<div class="a td one" style="left:1079.2px;top:637px">111</div>
<div class="a" style="left:486px;top:640.5px;width:7px;height:7px;border-radius:50%;background:#3ec78d"></div>
<div class="a td" style="left:498.5px;top:637px">正常</div>
<div class="a lvl" style="left:713px;top:635px">一级</div>
<div class="a pgt" style="left:554px;top:682px">显示13条，共 120 条</div>
<div class="a pg" style="left:680px;top:676px"><svg width="8" height="12" style="left:11.5px;top:9px" viewBox="0 0 8 12"><path d="M6.5 1L1.5 6L6.5 11" fill="none" stroke="#6a707a" stroke-width="1.2"/></svg></div>
<div class="a pg on" style="left:719px;top:676px">1</div>
<div class="a pg" style="left:758px;top:676px">2</div>
<div class="a pg" style="left:797px;top:676px">3</div>
<div class="a pg" style="left:836px;top:676px">4</div>
<div class="a pg" style="left:875px;top:676px">5</div>
<div class="a pg" style="left:914px;top:676px;letter-spacing:2px;text-indent:2px">···</div>
<div class="a pg" style="left:953px;top:676px">10</div>
<div class="a pg" style="left:992px;top:676px"><svg width="8" height="12" style="left:11.5px;top:9px" viewBox="0 0 8 12"><path d="M1.5 1L6.5 6L1.5 11" fill="none" stroke="#6a707a" stroke-width="1.2"/></svg></div>
<div class="a pgt" style="left:1038px;top:682px;font-size:14px;color:#444">前往</div>
<div class="a" style="left:1075px;top:676px;width:48px;height:30px;background:#f6f8fb;border-radius:3px"></div>
<div class="a pgt" style="left:1132px;top:682px;font-size:14px;color:#444">页</div>

</div>
</body></html>
